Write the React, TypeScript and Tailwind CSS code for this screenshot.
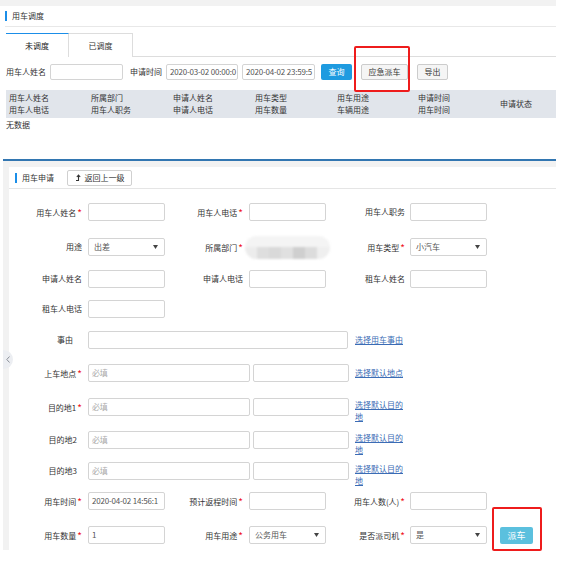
import React from 'react';

const Req = () => <span className="text-[#f0141e] text-[10px] ml-[1px] relative top-[1px]">*</span>;

const Box = ({ value, className = 'w-[77px]', muted = false }: { value?: string; className?: string; muted?: boolean }) => (
    <div
        className={`h-[18px] ${className} shrink-0 border border-[#d4d4d4] rounded-[2px] bg-white px-[3px] flex items-center overflow-hidden whitespace-nowrap tracking-[-0.2px] ${muted ? 'text-[#aaa]' : 'text-[#555]'}`}
    >
        {value}
    </div>
);

const Select = ({ value }: { value: string }) => (
    <div className="h-[18px] w-[77px] shrink-0 border border-[#d4d4d4] rounded-[2px] bg-white pl-[5px] pr-[6px] flex items-center justify-between text-[#555]">
        <span>{value}</span>
        <svg width="5" height="4" viewBox="0 0 5 4">
            <path d="M0 0H5L2.5 4Z" fill="#444" />
        </svg>
    </div>
);

const Link = ({ text }: { text: string }) => (
    <a className="ml-[6px] w-[52px] self-start pt-[1px] leading-[12px] text-[#3b6cb5] underline">{text}</a>
);

export default function App() {
    return (
        <div className="relative w-[565px] h-[579px] overflow-hidden bg-white text-[8px] leading-none text-[#333] font-['Noto_Sans_CJK_SC','Noto_Sans',sans-serif]">
            {/* 用车调度 */}
            <div className="w-[556px] h-[159px]">
                <div className="h-[6px] bg-[#f2f2f2]" />
                <div className="h-[21px] ml-[5px] flex items-center border-b border-[#e8e8e8]">
                    <span className="w-[2px] h-[10px] bg-[#1b8ee8]" />
                    <span className="ml-[5px]">用车调度</span>
                </div>

                <div className="mt-[6px] pl-[6px] flex items-end h-[24px]">
                    <div className="w-[63px] h-[24px] border-t border-t-[#1b8ee8] border-r border-r-[#ddd] flex items-center justify-center text-[#222]">
                        未调度
                    </div>
                    <div className="w-[64px] h-[24px] border-t border-r border-[#ddd] flex items-center justify-center">
                        已调度
                    </div>
                    <div className="flex-1 border-b border-[#ddd]" />
                </div>

                <div className="mt-[7px] ml-[6px] h-[16px] flex items-center">
                    <span>用车人姓名</span>
                    <Box className="ml-[4px] w-[73px] !h-[16px]" />
                    <span className="ml-[7px]">申请时间</span>
                    <Box className="ml-[4px] w-[72px] !h-[16px]" value="2020-03-02 00:00:0" />
                    <Box className="ml-[4px] w-[73px] !h-[16px]" value="2020-04-02 23:59:5" />
                    <button className="ml-[6px] w-[31px] h-[16px] bg-[#1e9be0] text-white rounded-[2px]">查询</button>
                    <button className="ml-[9px] w-[47px] h-[16px] bg-[#f5f5f5] border border-[#ccc] rounded-[2px]">应急派车</button>
                    <button className="ml-[9px] w-[31px] h-[16px] bg-[#f5f5f5] border border-[#ccc] rounded-[2px]">导出</button>
                </div>

                <div className="mt-[10px] ml-[6px] h-[28px] pl-[3px] bg-[#e1e5eb] flex items-center leading-[12px]">
                    <div className="w-[82px]">用车人姓名<br />用车人电话</div>
                    <div className="w-[82px]">所属部门<br />用车人职务</div>
                    <div className="w-[82px]">申请人姓名<br />申请人电话</div>
                    <div className="w-[82px]">用车类型<br />用车数量</div>
                    <div className="w-[81px]">用车用途<br />车辆用途</div>
                    <div className="w-[82px]">申请时间<br />用车时间</div>
                    <div className="flex-1">申请状态</div>
                </div>
                <div className="mt-[3px] ml-[6px]">无数据</div>
            </div>

            {/* 用车申请 */}
            <div className="ml-[3px] w-[553px] border-t-2 border-[#3276b1] bg-[#f2f2f2] pl-[6px] pt-[6px]">
                <div className="h-[383px] bg-white">
                    <div className="h-[22px] pl-[6px] flex items-center border-b border-[#e5e5e5]">
                        <span className="w-[2px] h-[10px] bg-[#1b8ee8]" />
                        <span className="ml-[5px]">用车申请</span>
                        <button className="ml-[13px] w-[65px] h-[16px] border border-[#d0d0d0] rounded-[2px] bg-white flex items-center justify-center gap-[4px]">
                            <svg width="6" height="7" viewBox="0 0 6 7">
                                <path d="M3.5 7V1.5M1.8 3L3.5 1L5.2 3M3.5 6.5H1" stroke="#333" strokeWidth="1.1" fill="none" />
                            </svg>
                            <span>返回上一级</span>
                        </button>
                    </div>

                    <div className="pt-[14px] flex flex-col">
                        <div className="h-[18px] flex items-center">
                            <div className="w-[73px] text-right">用车人姓名<Req /></div>
                            <Box className="ml-[6px] w-[77px]" />
                            <div className="w-[78px] text-right">用车人电话<Req /></div>
                            <Box className="ml-[6px] w-[77px]" />
                            <div className="w-[79px] text-right">用车人职务</div>
                            <Box className="ml-[5px] w-[77px]" />
                        </div>

                        <div className="mt-[17px] h-[18px] flex items-center">
                            <div className="w-[73px] text-right">用途</div>
                            <div className="ml-[6px]"><Select value="出差" /></div>
                            <div className="w-[78px] text-right">所属部门<Req /></div>
                            <div className="ml-[2px] w-[85px] h-[23px] rounded-full overflow-hidden flex flex-col blur-[1px]">
                                <div className="h-1/2 bg-[#f4f4f4]" />
                                <div className="h-1/2 flex">
                                    <div className="w-[12px] bg-[#ececec]" />
                                    <div className="w-[12px] bg-[#dedede]" />
                                    <div className="w-[12px] bg-[#d9d9d9]" />
                                    <div className="w-[12px] bg-[#e0e0e0]" />
                                    <div className="w-[12px] bg-[#cfcfcf]" />
                                    <div className="w-[12px] bg-[#dcdcdc]" />
                                    <div className="flex-1 bg-[#efefef]" />
                                </div>
                            </div>
                            <div className="w-[75px] text-right">用车类型<Req /></div>
                            <div className="ml-[5px]"><Select value="小汽车" /></div>
                        </div>

                        <div className="mt-[14px] h-[18px] flex items-center">
                            <div className="w-[73px] text-right">申请人姓名</div>
                            <Box className="ml-[6px] w-[77px]" />
                            <div className="w-[78px] text-right">申请人电话</div>
                            <Box className="ml-[6px] w-[77px]" />
                            <div className="w-[79px] text-right">租车人姓名</div>
                            <Box className="ml-[5px] w-[77px]" />
                        </div>

                        <div className="mt-[12px] h-[18px] flex items-center">
                            <div className="w-[73px] text-right">租车人电话</div>
                            <Box className="ml-[6px] w-[77px]" />
                        </div>

                        <div className="mt-[13px] h-[18px] flex items-center">
                            <div className="w-[73px] text-right pr-[9px]">事由</div>
                            <Box className="ml-[6px] w-[260px]" />
                            <a className="ml-[7px] text-[#3b6cb5] underline">选择用车事由</a>
                        </div>

                        <div className="mt-[15px] h-[18px] flex items-center">
                            <div className="w-[73px] text-right">上车地点<Req /></div>
                            <Box className="ml-[6px] w-[162px]" value="必填" muted />
                            <Box className="ml-[3px] w-[96px]" />
                            <a className="ml-[6px] text-[#3b6cb5] underline">选择默认地点</a>
                        </div>

                        <div className="mt-[16px] h-[18px] flex items-center">
                            <div className="w-[73px] text-right">目的地1<Req /></div>
                            <Box className="ml-[6px] w-[162px]" value="必填" muted />
                            <Box className="ml-[3px] w-[96px]" />
                            <Link text="选择默认目的地" />
                        </div>

                        <div className="mt-[15px] h-[18px] flex items-center">
                            <div className="w-[73px] text-right pr-[5px]">目的地2</div>
                            <Box className="ml-[6px] w-[162px]" value="必填" muted />
                            <Box className="ml-[3px] w-[96px]" />
                            <Link text="选择默认目的地" />
                        </div>

                        <div className="mt-[13px] h-[18px] flex items-center">
                            <div className="w-[73px] text-right pr-[5px]">目的地3</div>
                            <Box className="ml-[6px] w-[162px]" value="必填" muted />
                            <Box className="ml-[3px] w-[96px]" />
                            <Link text="选择默认目的地" />
                        </div>

                        <div className="mt-[12px] h-[18px] flex items-center">
                            <div className="w-[73px] text-right">用车时间<Req /></div>
                            <Box className="ml-[6px] w-[77px]" value="2020-04-02 14:56:1" />
                            <div className="w-[78px] text-right">预计返程时间<Req /></div>
                            <Box className="ml-[6px] w-[77px]" />
                            <div className="w-[79px] text-right">用车人数(人)<Req /></div>
                            <Box className="ml-[5px] w-[77px]" />
                        </div>

                        <div className="mt-[16px] h-[18px] flex items-center">
                            <div className="w-[73px] text-right">用车数量<Req /></div>
                            <Box className="ml-[6px] w-[77px]" value="1" />
                            <div className="w-[78px] text-right">用车用途<Req /></div>
                            <div className="ml-[6px]"><Select value="公务用车" /></div>
                            <div className="w-[79px] text-right">是否派司机<Req /></div>
                            <div className="ml-[5px]"><Select value="是" /></div>
                            <button className="ml-[13px] w-[33px] h-[17px] bg-[#5bc0de] text-white text-[9px] rounded-[2px]">派车</button>
                        </div>
                    </div>
                </div>
            </div>

            {/* collapse handle */}
            <div className="absolute left-[3px] top-[350px] w-[10px] h-[19px] rounded-r-full bg-[#eceef2] flex items-center justify-center">
                <svg width="4" height="7" viewBox="0 0 4 7">
                    <path d="M3.5 0.5L0.8 3.5L3.5 6.5" stroke="#8a8f98" strokeWidth="1" fill="none" />
                </svg>
            </div>

            {/* highlight marks */}
            <div className="absolute left-[354px] top-[46px] w-[56px] h-[46px] border-2 border-[#ee1c1c] rounded-[2px]" />
            <div className="absolute left-[492px] top-[507px] w-[50px] h-[44px] border-2 border-[#ee1c1c] rounded-[2px]" />
        </div>
    );
}
